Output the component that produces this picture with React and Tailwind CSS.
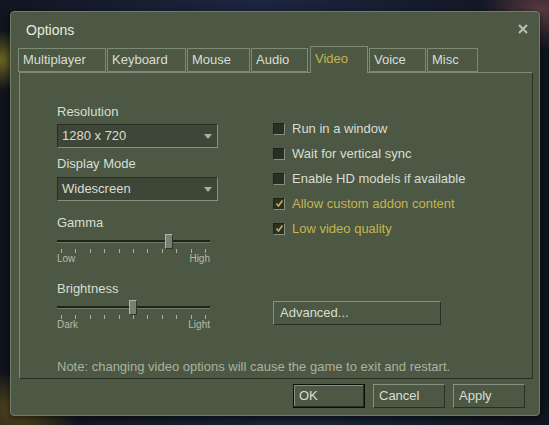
import React from "react";

const tabs = [
  { name: "Multiplayer", w: "w-[88px]" },
  { name: "Keyboard", w: "w-[79px]" },
  { name: "Mouse", w: "w-[63px]" },
  { name: "Audio", w: "w-[57px]" },
  { name: "Video", w: "w-[58px] ml-[1px]", active: true },
  { name: "Voice", w: "w-[57px]" },
  { name: "Misc", w: "w-[51px]" },
];

const checks = [
  { label: "Run in a window", on: false },
  { label: "Wait for vertical sync", on: false },
  { label: "Enable HD models if available", on: false },
  { label: "Allow custom addon content", on: true },
  { label: "Low video quality", on: true },
];

const Dropdown = ({ value }) => (
  <div className="w-[161px] h-[24px] flex items-center justify-between bg-[#3e4637] border border-t-[#282e22] border-l-[#282e22] border-r-[#889180] border-b-[#889180] pl-[4px] pr-[5px] text-[13px] leading-[16px] text-[#d8ded3]">
    <span>{value}</span>
    <svg width="8" height="5" viewBox="0 0 8 5">
      <path d="M0 0 L8 0 L4 5 Z" fill="#a9b09f" />
    </svg>
  </div>
);

const Slider = ({ thumb, low, high }) => (
  <div className="mt-[2px] w-[153px]">
    <div className="relative h-[16px]">
      <div className="absolute left-0 right-0 top-[7px] h-[3px] bg-[#1e2319] border-b border-[#6f7a66]" />
      <div
        className="absolute top-[1px] w-[8px] h-[15px] bg-[#7a7f74] border border-t-[#b0b6a8] border-l-[#b0b6a8] border-r-[#30362b] border-b-[#30362b]"
        style={{ left: thumb }}
      />
    </div>
    <div className="flex justify-between px-[4px] h-[4px]">
      {Array.from({ length: 11 }).map((_, i) => (
        <div key={i} className="w-px h-full bg-[#a9b09f]" />
      ))}
    </div>
    <div className="flex justify-between text-[10px] leading-[12px] text-[#b4bbab]">
      <span>{low}</span>
      <span>{high}</span>
    </div>
  </div>
);

const Check = ({ label, on }) => (
  <div className="h-[25px] flex items-center">
    <div className="w-[12px] h-[12px] bg-[#2a2f25] border border-t-[#1f2419] border-l-[#1f2419] border-r-[#889180] border-b-[#889180] flex items-center justify-center">
      {on && (
        <svg width="9" height="9" viewBox="0 0 9 9">
          <path d="M1.5 4.5 L3.5 7 L7.5 1.5" fill="none" stroke="#c4b550" strokeWidth="1.6" />
        </svg>
      )}
    </div>
    <span className={`ml-[7px] text-[13px] leading-[16px] ${on ? "text-[#c4b550]" : "text-[#d8ded3]"}`}>
      {label}
    </span>
  </div>
);

const Button = ({ children, focus, className = "" }) => (
  <div
    className={`h-[24px] flex items-center pl-[5px] text-[13px] leading-[16px] text-[#d8ded3] bg-[#4c5844] ${
      focus
        ? "border border-[#0c0e0a] shadow-[inset_-1px_-1px_0_#282e22,inset_1px_1px_0_#889180]"
        : "border border-t-[#889180] border-l-[#889180] border-r-[#282e22] border-b-[#282e22]"
    } ${className}`}
  >
    {children}
  </div>
);

export default function App() {
  return (
    <div
      className="w-[549px] h-[425px] overflow-hidden pt-[11px] pl-[10px] bg-[#0f131c] bg-[radial-gradient(ellipse_40px_30px_at_0px_60px,#6b6320,transparent),radial-gradient(ellipse_60px_40px_at_20px_410px,#5a4a1c,transparent),radial-gradient(ellipse_60px_40px_at_540px_10px,#5a3a40,transparent),radial-gradient(ellipse_300px_60px_at_260px_0px,#1c2640,transparent),radial-gradient(ellipse_300px_40px_at_300px_425px,#1a2236,transparent)]"
      style={{ fontFamily: '"Liberation Sans", Arial, sans-serif' }}
    >
      <div className="w-[530px] h-[405px] bg-[#4c5844] border border-[#727d68] rounded-[4px] flex flex-col shadow-[0_2px_6px_rgba(0,0,0,0.6)]">
        {/* title bar */}
        <div className="h-[34px] flex justify-between pl-[15px] pr-[11px] pt-[10px]">
          <span className="text-[14px] leading-[17px] text-[#e6ebe1]">Options</span>
          <svg width="10" height="10" viewBox="0 0 10 10" className="mt-[2px]">
            <path d="M1 1 L9 9 M9 1 L1 9" stroke="#b9bfb1" strokeWidth="2" />
          </svg>
        </div>

        {/* tabs */}
        <div className="flex items-end gap-[1px] pl-[7px] h-[26px] relative z-10">
          {tabs.map((t) => (
            <div
              key={t.name}
              className={`${t.w} flex items-center pl-[4px] text-[13px] leading-[16px] border border-[#7f8a73] ${
                t.active
                  ? "h-[27px] -mb-px border-b-0 bg-[#4c5844] text-[#c4b550] pb-[2px]"
                  : "h-[24px] text-[#d8ded3]"
              }`}
            >
              {t.name}
            </div>
          ))}
        </div>

        {/* panel */}
        <div className="ml-[8px] w-[514px] h-[307px] border border-t-[#7f8a73] border-l-[#7f8a73] border-r-[#282e22] border-b-[#282e22] flex flex-col">
          <div className="flex flex-1">
            <div className="ml-[37px] w-[161px] pt-[31px] text-[13px] leading-[16px] text-[#d8ded3]">
              <div>Resolution</div>
              <div className="mt-[4px]">
                <Dropdown value="1280 x 720" />
              </div>
              <div className="mt-[8px]">Display Mode</div>
              <div className="mt-[5px]">
                <Dropdown value="Widescreen" />
              </div>
              <div className="mt-[14px]">Gamma</div>
              <Slider thumb="108px" low="Low" high="High" />
              <div className="mt-[16px]">Brightness</div>
              <Slider thumb="72px" low="Dark" high="Light" />
            </div>

            <div className="ml-[55px] pt-[43px]">
              {checks.map((c) => (
                <Check key={c.label} label={c.label} on={c.on} />
              ))}
              <Button className="mt-[60px] w-[168px] h-[23px] pl-[6px]">Advanced...</Button>
            </div>
          </div>
          <div className="pl-[37px] pb-[3px] text-[13px] leading-[16px] text-[#aab29f]">
            Note: changing video options will cause the game to exit and restart.
          </div>
        </div>

        {/* buttons */}
        <div className="flex justify-end gap-[8px] pr-[14px] mt-[5px]">
          <Button focus className="w-[72px]">OK</Button>
          <Button className="w-[72px]">Cancel</Button>
          <Button className="w-[72px]">Apply</Button>
        </div>
      </div>
    </div>
  );
}
